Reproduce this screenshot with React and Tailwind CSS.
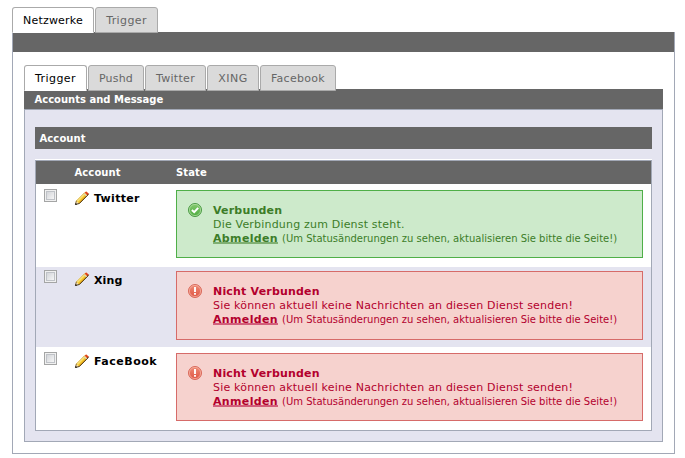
const outerTabs = [
  { label: 'Netzwerke', cls: 'w-[82px] tracking-[0.2px]', active: true },
  { label: 'Trigger', cls: 'w-[63px] tracking-[0.4px]' },
];

const innerTabs = [
  { label: 'Trigger', cls: 'w-[63px] tracking-[0.45px]', active: true },
  { label: 'Pushd', cls: 'w-[56px] tracking-[0.2px]' },
  { label: 'Twitter', cls: 'w-[61px] tracking-[0.3px]' },
  { label: 'XING', cls: 'w-[52px] tracking-[0.5px]' },
  { label: 'Facebook', cls: 'w-[76px] tracking-[0.3px]' },
];

function Tabs({ tabs }) {
  return (
    <div className="relative flex h-[26px] gap-px">
      {tabs.map((t) => (
        <button
          key={t.label}
          className={`${t.cls} h-[26px] shrink-0 rounded-t-[3px] border pt-[2px] text-center text-[11px] leading-[22px] ${
            t.active
              ? 'border-[#aaaaaa] border-b-white bg-white text-black'
              : 'border-[#aaaaaa] bg-[#dadada] text-[#666666]'
          }`}
        >
          {t.label}
        </button>
      ))}
    </div>
  );
}

function Pencil() {
  return (
    <svg width="16" height="16" viewBox="0 0 16 16" className="block shrink-0">
      <path d="M1.4 14.6 L2.4 10.6 L10.6 2.4 L12.2 1.4 L14.6 3.6 L13.6 5.4 L5.4 13.6 Z" fill="#f9cf35" />
      <path d="M3 10.9 L10.2 3.7" stroke="#fff2a2" strokeWidth="1.5" />
      <path d="M5 13 L12.3 5.7" stroke="#e0a01c" strokeWidth="1.1" />
      <path d="M9.8 3.2 L12.8 6.2" stroke="#d8d4cf" strokeWidth="1.1" />
      <path d="M10.7 2.5 L12.2 1.4 L14.6 3.6 L13.6 5.4 Z" fill="#e23b24" />
      <path d="M1.5 14.5 L2.4 10.9 L5.1 13.6 Z" fill="#f6e2b8" />
      <path d="M2.3 11.2 L10.6 2.8" stroke="#c9962a" strokeWidth="0.7" fill="none" />
      <path d="M1.6 14.4 L5.4 13.5 L13.8 5.1 L14.5 3.8" stroke="#3c2a10" strokeWidth="0.9" fill="none" />
      <path d="M2.4 10.8 L1.4 14.6" stroke="#6b5124" strokeWidth="0.8" />
      <path d="M1.1 14.9 L1.6 12.8 L3.2 14.4 Z" fill="#222" />
    </svg>
  );
}

function StateIcon({ ok }) {
  return (
    <svg width="14" height="14" viewBox="0 0 14 14" className="block shrink-0">
      <defs>
        <linearGradient id="okFill" x1="0" y1="0" x2="0" y2="1">
          <stop offset="0" stopColor="#86cb70" />
          <stop offset="1" stopColor="#4cab3f" />
        </linearGradient>
        <linearGradient id="badFill" x1="0" y1="0" x2="0" y2="1">
          <stop offset="0" stopColor="#ee8d78" />
          <stop offset="1" stopColor="#df5342" />
        </linearGradient>
      </defs>
      <circle cx="7" cy="7" r="6.5" fill={ok ? 'url(#okFill)' : 'url(#badFill)'} stroke={ok ? '#4c9a46' : '#d9695b'} strokeWidth="1" />
      <circle cx="7" cy="7" r="5.6" fill="none" stroke={ok ? '#b9e2ab' : '#f7b9aa'} strokeWidth="0.7" />
      {ok ? (
        <path d="M3.9 7 L6.2 9.2 L10.2 4.9" stroke="#fff" strokeWidth="2" fill="none" />
      ) : (
        <path d="M7 3 V8 M7 9 V10.8" stroke="#fff" strokeWidth="1.9" fill="none" />
      )}
    </svg>
  );
}

function Checkbox() {
  return (
    <div className="h-[13px] w-[13px] border border-[#a4a5a5] bg-[#f0f0f0] p-px">
      <div className="h-[9px] w-[9px] border border-[#bfc2c7] bg-linear-to-br from-[#d3d5d9] to-[#f6f6f6]" />
    </div>
  );
}

function Alert({ ok, box }) {
  return (
    <div
      className={`flex w-[467px] border ${box} ${
        ok ? 'border-[#4faf48] bg-[#cdeacb] text-[#3c7d28]' : 'border-[#d66b69] bg-[#f6d2ce] text-[#b3002d]'
      }`}
    >
      <div className="w-[36px] pt-[12px] pl-[11px]">
        <StateIcon ok={ok} />
      </div>
      <div className="pt-[13px] text-[11px] leading-[14px] tracking-[0.19px] whitespace-nowrap">
        <div className="font-bold">{ok ? 'Verbunden' : 'Nicht Verbunden'}</div>
        <div>{ok ? 'Die Verbindung zum Dienst steht.' : 'Sie können aktuell keine Nachrichten an diesen Dienst senden!'}</div>
        <div className="flex">
          <a className={`h-[12px] w-[65px] border-b-2 font-bold tracking-[0.35px] ${ok ? 'border-[#7fb072]' : 'border-[#d25f7b]'}`}>
            {ok ? 'Abmelden' : 'Anmelden'}
          </a>
          <span className="ml-[4px] text-[10px] tracking-normal">(Um Statusänderungen zu sehen, aktualisieren Sie bitte die Seite!)</span>
        </div>
      </div>
    </div>
  );
}

const rows = [
  { name: 'Twitter', ok: true, row: 'h-[83px] bg-white', pad: 'pt-[6px]', text: 'pt-px tracking-[0.3px]', box: 'h-[68px]', alert: 'pt-[6px]', check: 'pt-[5px]' },
  { name: 'Xing', ok: false, row: 'h-[80px] bg-[#e4e4f0]', pad: 'pt-[4px]', text: 'pt-[2px] tracking-[0.1px]', box: 'h-[69px]', alert: 'pt-[4px]', check: 'pt-[3px]' },
  { name: 'FaceBook', ok: false, row: 'h-[83px] bg-white', pad: 'pt-[6px]', text: 'pt-px tracking-[0.5px]', box: 'h-[68px]', alert: 'pt-[6px]', check: 'pt-[5px]' },
];

export default function App() {
  return (
    <div className="h-[458px] w-[685px] overflow-hidden bg-white pt-[7px] pl-[12px] font-['Verdana','DejaVu_Sans',sans-serif]">
      <div className="relative z-10 -mb-px">
        <Tabs tabs={outerTabs} />
      </div>
      <div className="h-[422px] w-[663px] border border-t-0 border-[#a2a8b6]">
        <div className="h-[20px] bg-[#666666]" />
        <div className="pt-[13px] pl-[11px]">
          <div className="relative z-10 -mb-[2px]">
            <Tabs tabs={innerTabs} />
          </div>
          <div className="h-[20px] w-[639px] bg-[#666666] pl-[10.5px] text-[10px] leading-[22px] font-bold text-white">
            Accounts and Message
          </div>
          <div className="h-[333px] w-[639px] border border-[#a2a8b6] bg-[#e4e4f0] pt-[17px] pl-[10px]">
            <div className="h-[22px] w-[617px] bg-[#666666] pl-[4.5px] text-[10px] leading-[24px] font-bold tracking-[0.1px] text-white">Account</div>
            <div className="mt-[10px] w-[617px] border-t border-white">
              <div className="border border-[#a2a8b6]">
                <div className="flex h-[23px] bg-[#666666] text-[10px] leading-[24px] font-bold tracking-[0.1px] text-white">
                  <div className="w-[38.5px]" />
                  <div className="w-[101.5px]">Account</div>
                  <div>State</div>
                </div>
                {rows.map((r) => (
                  <div key={r.name} className={`flex ${r.row}`}>
                    <div className={`w-[38px] pl-[8px] ${r.check}`}>
                      <Checkbox />
                    </div>
                    <div className={`flex w-[102px] items-start gap-[4px] ${r.pad}`}>
                      <Pencil />
                      <span className={`text-[11px] leading-[16px] font-bold text-black ${r.text}`}>{r.name}</span>
                    </div>
                    <div className={r.alert}>
                      <Alert ok={r.ok} box={r.box} />
                    </div>
                  </div>
                ))}
              </div>
            </div>
          </div>
        </div>
      </div>
    </div>
  );
}
